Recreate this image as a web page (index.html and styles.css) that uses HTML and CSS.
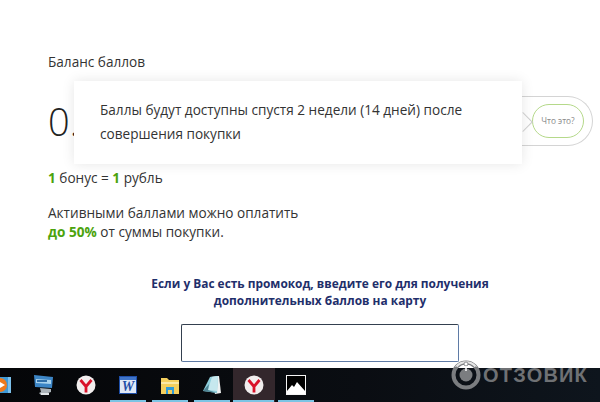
FILE: index.html
```html
<!DOCTYPE html>
<html>
<head>
    <title>Баланс баллов</title>
    <link rel="stylesheet" href="styles.css">
</head>
<body>
    <main class="page">
        <section class="balance">
            <p class="balance-title">Баланс баллов</p>
            <div class="balance-row">
                <span class="balance-value">0.</span>
                <div class="balance-pill">
                    <a class="hint-btn">Что это?</a>
                </div>
            </div>
            <p class="rate"><b>1</b> бонус = <b>1</b> рубль</p>
            <p class="pay">Активными баллами можно оплатить<br><b>до 50%</b> от суммы покупки.</p>
        </section>
        <section class="promo">
            <p class="promo-title">Если у Вас есть промокод, введите его для получения<br>дополнительных баллов на карту</p>
            <input class="promo-input" type="text">
        </section>
    </main>

    <div class="tooltip">
        <p>Баллы будут доступны спустя 2 недели (14 дней) после совершения покупки</p>
    </div>

    <footer class="taskbar">
        <span class="task task-media">
            <svg width="11" height="18" viewBox="0 0 11 18"><rect x="0" y="1" width="11" height="16" fill="#3f9ad6"/><rect x="8" y="1" width="3" height="16" fill="#7cc0ea"/><circle cx="0" cy="9" r="7" fill="#ee7a1c"/><path d="M0 6l5 3-5 3z" fill="#fff"/></svg>
        </span>
        <span class="task task-pc">
            <svg width="22" height="22" viewBox="0 0 22 22"><path d="M1 1l19 2-1 11-17-1z" fill="#3d86c6"/><path d="M3 5l15 1v4l-15-1z" fill="#a9d3ee"/><path d="M4 6h10v2h-10z" fill="#2f6ea8"/><path d="M7 14l11 1v3l-3 1v2h-7l-2-2 2-1z" fill="#aab2b8"/><path d="M8 19h8v2h-8z" fill="#dfe4e7"/></svg>
        </span>
        <span class="task task-ya">
            <svg width="20" height="20" viewBox="0 0 20 20"><circle cx="10" cy="10" r="9.5" fill="#f2eeee"/><path d="M4.500 5l5.500 6.500 5.500-6.500M10 11v6.500" fill="none" stroke="#d9122a" stroke-width="2.800"/></svg>
        </span>
        <span class="task task-word task-open">
            <svg width="18" height="18" viewBox="0 0 18 18"><rect x="0.500" y="0.500" width="17" height="17" fill="#dfe8f6" stroke="#1f4fa8"/><rect x="1" y="1" width="16" height="3" fill="#3f74c8"/><text x="9" y="14.500" text-anchor="middle" class="word-letter">W</text></svg>
        </span>
        <span class="task task-folder task-open">
            <svg width="18" height="18" viewBox="0 0 18 18"><path d="M0 2h6l2 2h10v14H0z" fill="#f4cf5e"/><rect x="0" y="6" width="18" height="2" fill="#fbe9a6"/><path d="M5 11h8v7h-2v-4H7v4H5z" fill="#2f9bd9"/></svg>
        </span>
        <span class="task task-note task-open">
            <svg width="20" height="20" viewBox="0 0 20 20"><path d="M8 2l9-1 2 17-6 1z" fill="#eef2f2"/><path d="M8 2l8-1-1 17-14-2z" fill="#8fcfdc"/><path d="M10 2l6-1-1 15-9-1z" fill="#c6e8ee"/><path d="M1 16l6-7-1 6 9 3z" fill="#4f8594"/></svg>
        </span>
        <span class="task task-ya task-active task-open">
            <svg width="20" height="20" viewBox="0 0 20 20"><circle cx="10" cy="10" r="9.5" fill="#f2eeee"/><path d="M4.500 5l5.500 6.500 5.500-6.500M10 11v6.500" fill="none" stroke="#d9122a" stroke-width="2.800"/></svg>
        </span>
        <span class="task task-photo task-open">
            <svg width="20" height="20" viewBox="0 0 20 20"><rect x="0.500" y="0.500" width="19" height="19" fill="#000" stroke="#f4f4f4"/><path d="M1 16l5-6 2 2 3-5 8 9v3H1z" fill="#fff"/></svg>
        </span>
    </footer>

    <div class="watermark">
        <svg width="32" height="32" viewBox="0 0 32 32">
            <circle cx="16" cy="16" r="12.500" fill="none" stroke="#7b7d80" stroke-width="4"/>
            <path d="M5 8a14.500 14.500 0 0 1 22 0" fill="none" stroke="#bdbdbd" stroke-width="1"/>
            <path d="M6.500 7.500a13 13 0 0 1 19 0" fill="none" stroke="#e6e6e6" stroke-width="2"/>
            <circle cx="16" cy="16" r="6.500" fill="#7b7d80"/>
            <circle cx="16" cy="5" r="2" fill="#fff" stroke="#8d8f92"/>
            <path d="M16 7v5" stroke="#fff" stroke-width="1.500"/>
        </svg>
        <span>ОТЗОВИК</span>
    </div>
</body>
</html>
```

FILE: styles.css
```css
html,
body {
    margin: 0;
    padding: 0;
    width: 600px;
    height: 402px;
    overflow: hidden;
    font-family: "Open Sans", sans-serif;
    font-size: 13.6px;
    background: #fff;
    color: #333;
}
p {
    margin: 0;
}
b {
    color: #4ca30d;
}
.page {
    height: 368px;
    overflow: hidden;
    padding: 52px 7px 0 48px;
    box-sizing: border-box;
}
.balance-title {
    line-height: 19px;
}
.balance-row {
    display: flex;
    justify-content: space-between;
    align-items: center;
    height: 50px;
    margin-top: 25px;
}
.balance-value {
    font-size: 38px;
    font-weight: 300;
    color: #222;
}
.balance-pill {
    display: flex;
    align-items: center;
    justify-content: flex-end;
    width: 240px;
    height: 50px;
    box-sizing: border-box;
    padding-right: 8px;
    border: 1px solid #d4d4d4;
    border-left: 0;
    border-radius: 0 25px 25px 0;
}
.hint-btn {
    width: 52px;
    height: 34px;
    box-sizing: border-box;
    border: 1px solid #b5d98a;
    border-radius: 17px;
    font-size: 8.3px;
    line-height: 32px;
    text-align: center;
    color: #888;
}
.rate {
    margin-top: 22px;
    line-height: 19px;
}
.pay {
    margin-top: 16px;
    line-height: 19px;
}
.promo {
    display: flex;
    flex-direction: column;
    align-items: center;
    margin: 34px 0 0 -48px;
    padding-left: 47px;
}
.promo-title {
    font-size: 11.9px;
    font-weight: 700;
    line-height: 17px;
    text-align: center;
    color: #1f2f6b;
}
.promo-input {
    width: 278px;
    height: 38px;
    box-sizing: border-box;
    margin-top: 15px;
    border: 1px solid;
    border-color: #34404f #5f7ba6 #5f7ba6 #34404f;
    border-radius: 2px;
    background: #fff;
}
.tooltip {
    position: absolute;
    left: 74px;
    top: 81px;
    width: 448px;
    height: 83px;
    box-sizing: border-box;
    padding: 17px 26px;
    background: #fff;
    box-shadow: 0 0 12px rgba(0, 0, 0, 0.1);
    line-height: 24px;
    color: #333;
}
.tooltip::after {
    content: "";
    position: absolute;
    left: 442px;
    top: 34px;
    width: 13px;
    height: 13px;
    border-top: 1px solid #ccc;
    border-right: 1px solid #ccc;
    transform: rotate(45deg);
}
.taskbar {
    display: flex;
    align-items: stretch;
    height: 34px;
    background: linear-gradient(90deg, #050608, #0a0d12 60%, #0e151d);
}
.task {
    position: relative;
    display: flex;
    align-items: center;
    justify-content: center;
    width: 42px;
    flex: none;
    padding-bottom: 1px;
    box-sizing: border-box;
}
.task-open::after {
    content: "";
    position: absolute;
    left: 3px;
    right: 3px;
    bottom: 0;
    height: 2px;
    background: #7cc4e4;
}
.task-media {
    width: 11px;
    justify-content: flex-start;
    overflow: hidden;
}
.task-pc {
    margin-left: 12px;
}
.task-active {
    background: #33272c;
}
.task-active.task-open::after {
    left: 0;
    right: 1px;
}
.word-letter {
    font-family: "Liberation Serif", serif;
    font-size: 14px;
    font-weight: 700;
    font-style: italic;
    fill: #1f4fa8;
}
.watermark {
    position: absolute;
    left: 450px;
    top: 359px;
    display: flex;
    align-items: center;
    gap: 1px;
    color: #6f7174;
    font-family: "Liberation Sans", sans-serif;
    font-size: 20px;
    font-weight: 700;
    letter-spacing: 1.2px;
}
```
